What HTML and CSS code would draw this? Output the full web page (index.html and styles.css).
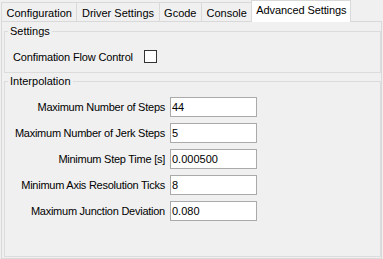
FILE: index.html
```html
<!DOCTYPE html>
<html lang="en">
<head>
  <meta charset="UTF-8" />
  <title>Advanced Settings</title>
  <link rel="stylesheet" href="styles.css">
</head>
<body>
  <div class="window">
    <div class="tabs">
      <div class="tab">Configuration</div>
      <div class="tab">Driver Settings</div>
      <div class="tab">Gcode</div>
      <div class="tab">Console</div>
      <div class="tab active">Advanced Settings</div>
    </div>
    <div class="panel">
      <fieldset class="group settings">
        <legend>Settings</legend>
        <div class="check-row">
          <label for="flowControl">Confimation Flow Control</label>
          <input type="checkbox" id="flowControl" class="check" />
        </div>
      </fieldset>
      <fieldset class="group interpolation">
        <legend>Interpolation</legend>
        <div class="fields">
          <label for="maxSteps">Maximum Number of Steps</label>
          <input type="text" id="maxSteps" value="44" />
          <label for="maxJerk">Maximum Number of Jerk Steps</label>
          <input type="text" id="maxJerk" value="5" />
          <label for="minStep">Minimum Step Time [s]</label>
          <input type="text" id="minStep" value="0.000500" />
          <label for="minTicks">Minimum Axis Resolution Ticks</label>
          <input type="text" id="minTicks" value="8" />
          <label for="junction">Maximum Junction Deviation</label>
          <input type="text" id="junction" value="0.080" />
        </div>
      </fieldset>
    </div>
  </div>
</body>
</html>
```

FILE: styles.css
```css
body {
  margin: 0;
  background-color: #f0f0f0;
  color: #000;
  font-family: 'Liberation Sans', Arial, sans-serif;
  font-size: 11px;
}
.window {
  margin-left: 1px;
  width: 381px;
  height: 259px;
  display: flex;
  flex-direction: column;
}
.tabs {
  display: flex;
  align-items: flex-end;
  height: 21px;
}
.tab {
  box-sizing: border-box;
  height: 19px;
  padding: 2px 4.5px 0;
  line-height: 16px;
  border: 1px solid #d9d9d9;
  border-bottom: none;
  border-right: none;
  white-space: nowrap;
}
.tab.active {
  position: relative;
  z-index: 1;
  height: 22px;
  margin-bottom: -1px;
  padding: 1px 4px 0;
  background-color: #fff;
  border-right: 1px solid #d9d9d9;
  letter-spacing: -0.1px;
}
.panel {
  flex: 1;
  border: 1px solid #d9d9d9;
  padding: 2px 0 1px 2px;
  display: flex;
  flex-direction: column;
  gap: 1px;
}
.group {
  margin: 0;
  padding: 0 0 0 3px;
  min-width: 0;
  border: 1px solid #dcdcdc;
}
.group legend {
  padding: 0 2px;
  line-height: 14px;
}
.settings {
  padding-top: 12px;
  padding-bottom: 9px;
}
.check-row {
  display: flex;
  align-items: center;
  height: 13px;
  padding-left: 5px;
}
.check-row label {
  letter-spacing: -0.15px;
}
.check {
  appearance: none;
  width: 13px;
  height: 13px;
  margin: 0 0 0 11px;
  border: 1px solid #333;
  background-color: #fff;
}
.interpolation {
  flex: 1;
  padding-top: 9px;
}
.fields {
  display: grid;
  grid-template-columns: 157px 87px;
  grid-auto-rows: 20px;
  column-gap: 5px;
  row-gap: 6px;
}
.fields label {
  text-align: right;
  line-height: 20px;
  white-space: nowrap;
  letter-spacing: -0.25px;
}
.fields input {
  box-sizing: border-box;
  width: 87px;
  height: 20px;
  margin: 0;
  padding: 0 1px;
  border: 1px solid #aaa;
  background-color: #fff;
  font: inherit;
  color: #000;
}
```
